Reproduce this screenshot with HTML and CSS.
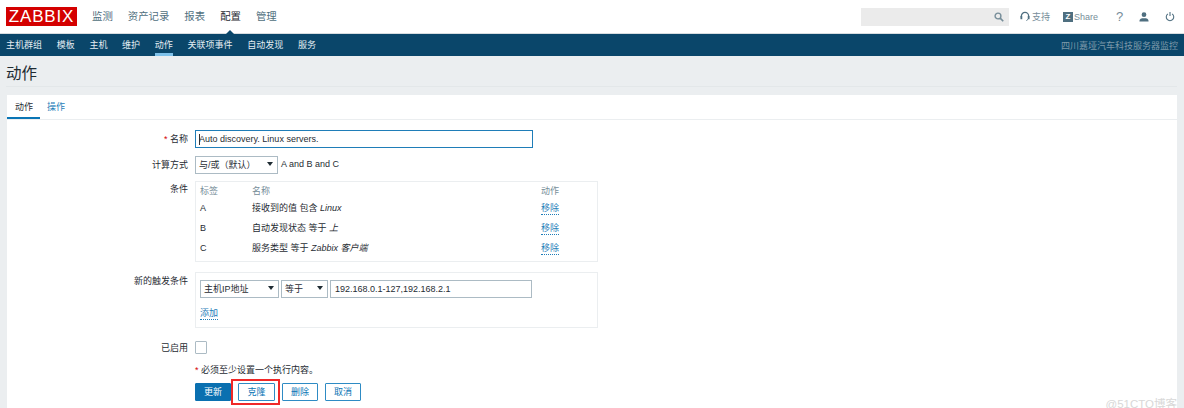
FILE: index.html
```html
<!DOCTYPE html>
<html lang="zh-CN">
<head>
    <meta charset="UTF-8">
    <title>动作</title>
    <link rel="stylesheet" href="styles.css">
</head>
<body>
    <header class="top-nav">
        <div class="logo">ZABBIX</div>
        <ul class="main-menu">
            <li>监测</li>
            <li>资产记录</li>
            <li>报表</li>
            <li class="selected">配置</li>
            <li>管理</li>
        </ul>
        <div class="top-tools">
            <div class="search">
                <svg width="10" height="10" viewBox="0 0 13 13"><circle cx="5.2" cy="5.2" r="3.8" fill="none" stroke="#768d99" stroke-width="1.8"/><path d="M8 8l4 4" stroke="#768d99" stroke-width="2.2"/></svg>
            </div>
            <span class="tool support">
                <svg width="10" height="11" viewBox="0 0 11 12"><path d="M1.5 7V5.5a4 4 0 0 1 8 0V7" fill="none" stroke="#4f6f80" stroke-width="1.4"/><rect x="0.5" y="5.5" width="2" height="3.5" fill="#4f6f80"/><rect x="8.5" y="5.5" width="2" height="3.5" fill="#4f6f80"/><path d="M9 9l-2 1.500" stroke="#4f6f80"/></svg>
                支持
            </span>
            <span class="tool share"><b class="share-icon">Z</b>Share</span>
            <span class="tool help">?</span>
            <span class="tool user">
                <svg width="10" height="10" viewBox="0 0 11 11"><circle cx="5.500" cy="3" r="2.600" fill="#4f6f80"/><path d="M0.500 10.500c0-3 2-3.500 5-3.500s5 .5 5 3.500z" fill="#4f6f80"/></svg>
            </span>
            <span class="tool power">
                <svg width="10" height="11" viewBox="0 0 12 12"><path d="M3.500 2.800a4.500 4.500 0 1 0 5 0" fill="none" stroke="#4f6f80" stroke-width="1.300"/><path d="M6 0.500v5" stroke="#4f6f80" stroke-width="1.300"/></svg>
            </span>
        </div>
    </header>

    <nav class="sub-nav">
        <ul class="sub-menu">
            <li>主机群组</li>
            <li>模板</li>
            <li>主机</li>
            <li>维护</li>
            <li class="selected">动作</li>
            <li>关联项事件</li>
            <li>自动发现</li>
            <li>服务</li>
        </ul>
        <div class="server-name">四川嘉垭汽车科技服务器监控</div>
    </nav>

    <main class="content">
        <h1 class="page-title">动作</h1>
        <div class="panel">
            <div class="tabs">
                <span class="tab active">动作</span>
                <span class="tab">操作</span>
            </div>
            <form class="form">
                <div class="row row-name">
                    <label class="row-label"><i class="req">*</i> 名称</label>
                    <div class="row-field"><input class="name-input" type="text" value="Auto discovery. Linux servers."></div>
                </div>
                <div class="row row-calc">
                    <label class="row-label">计算方式</label>
                    <div class="row-field inline">
                        <span class="select calc-select">与/或（默认）</span>
                        <span class="calc-text">A and B and C</span>
                    </div>
                </div>
                <div class="row row-cond">
                    <label class="row-label">条件</label>
                    <div class="row-field">
                        <div class="box cond-box">
                            <div class="cond-row cond-head"><span>标签</span><span>名称</span><span>动作</span></div>
                            <div class="cond-row"><span>A</span><span>接收到的值 包含 <em>Linux</em></span><a class="link">移除</a></div>
                            <div class="cond-row"><span>B</span><span>自动发现状态 等于 <em>上</em></span><a class="link">移除</a></div>
                            <div class="cond-row"><span>C</span><span>服务类型 等于 <em>Zabbix 客户端</em></span><a class="link">移除</a></div>
                        </div>
                    </div>
                </div>
                <div class="row row-new">
                    <label class="row-label">新的触发条件</label>
                    <div class="row-field">
                        <div class="box new-box">
                            <div class="inline new-fields">
                                <span class="select type-select">主机IP地址</span>
                                <span class="select op-select">等于</span>
                                <input class="value-input" type="text" value="192.168.0.1-127,192.168.2.1">
                            </div>
                            <a class="link add-link">添加</a>
                        </div>
                    </div>
                </div>
                <div class="row row-enabled">
                    <label class="row-label">已启用</label>
                    <div class="row-field"><span class="checkbox"></span></div>
                </div>
                <div class="row row-note">
                    <div class="row-label"></div>
                    <div class="row-field"><i class="req">*</i> 必须至少设置一个执行内容。</div>
                </div>
                <div class="row row-buttons">
                    <div class="row-label"></div>
                    <div class="row-field buttons">
                        <button class="btn primary" type="button">更新</button>
                        <span class="highlight"><button class="btn clone" type="button">克隆</button></span>
                        <button class="btn" type="button">删除</button>
                        <button class="btn" type="button">取消</button>
                    </div>
                </div>
            </form>
        </div>
    </main>
    <div class="watermark">@51CTO博客</div>
</body>
</html>
```

FILE: styles.css
```css
html, body {
    margin: 0;
    padding: 0;
    height: 408px;
    overflow: hidden;
}
body {
    background: #ebeef0;
    color: #1f2c33;
    font-family: "Liberation Sans", "Noto Sans CJK SC", sans-serif;
    font-size: 9px;
    position: relative;
}
ul {
    list-style: none;
    margin: 0;
    padding: 0;
}

/* top bar */
.top-nav {
    display: flex;
    align-items: center;
    height: 33px;
    padding: 0 9px 0 6px;
    background: #fff;
    border-bottom: 1px solid #d8dde0;
    box-sizing: content-box;
}
.logo {
    width: 71px;
    height: 19px;
    margin-top: -1px;
    background: #d40000;
    color: #fff;
    font-size: 17px;
    line-height: 19px;
    text-align: center;
    letter-spacing: 0.8px;
}
.main-menu {
    display: flex;
    gap: 15px;
    margin: -2px 0 0 15px;
    font-size: 10.400px;
    color: #4f6f80;
}
.main-menu .selected {
    color: #1f2c33;
    position: relative;
}
.main-menu .selected::after {
    content: "";
    position: absolute;
    left: 4px;
    top: 22px;
    border: 6px solid transparent;
    border-top: 0;
    border-bottom-color: #0a466a;
}
.top-tools {
    display: flex;
    align-items: center;
    margin-left: auto;
    color: #768d99;
}
.search {
    display: flex;
    align-items: center;
    justify-content: flex-end;
    width: 148px;
    height: 18px;
    padding-right: 5px;
    box-sizing: border-box;
    background: #ebebeb;
    margin-right: 11px;
}
.tool {
    display: flex;
    align-items: center;
    gap: 2px;
    font-size: 9px;
}
.support {
    width: 43px;
}
.share {
    width: 53px;
}
.share-icon {
    width: 10px;
    height: 10px;
    margin-right: -1px;
    background: #4f6f80;
    color: #fff;
    font-size: 8px;
    line-height: 10px;
    text-align: center;
}
.help {
    width: 23px;
    font-size: 13px;
}
.user {
    width: 26px;
}
.power {
    width: 10px;
}

/* second bar */
.sub-nav {
    display: flex;
    align-items: center;
    justify-content: space-between;
    height: 22px;
    padding: 0 6px;
    background: #0a466a;
    color: #e4edf2;
}
.sub-menu {
    display: flex;
    gap: 14.700px;
    height: 22px;
    line-height: 22px;
    font-size: 9px;
}
.sub-menu .selected {
    box-shadow: inset 0 -3px 0 #7ec1ea;
}
.server-name {
    color: #7d99a9;
    font-size: 9px;
}

/* page */
.page-title {
    margin: 0 7px 8px 6px;
    height: 31px;
    line-height: 35px;
    font-size: 15.500px;
    font-weight: normal;
    border-bottom: 1px solid #e3e7e9;
    box-sizing: border-box;
}
.panel {
    margin: 0 7px;
    background: #fff;
    height: 320px;
}
.tabs {
    display: flex;
    height: 24px;
    border-bottom: 1px solid #ebeef0;
    font-size: 9px;
}
.tab {
    padding: 0 7px;
    line-height: 24px;
    color: #1f7db8;
}
.tab.active {
    padding: 0 7px 0 8px;
    color: #1f2c33;
    box-shadow: inset 0 -2px 0 #0a75b5;
}

/* form rows */
.form {
    padding-top: 10px;
}
.row {
    display: flex;
}
.row-label {
    width: 188px;
    padding-right: 7px;
    box-sizing: border-box;
    text-align: right;
    color: #1f2c33;
}
.row-field {
    flex: 1;
}
.inline {
    display: flex;
    align-items: center;
}
.req {
    color: #d40000;
    font-style: normal;
}
.row-name {
    height: 19px;
    line-height: 18px;
    margin-bottom: 6px;
}
.name-input {
    display: block;
    width: 338px;
    height: 18px;
    padding: 0 3px;
    box-sizing: border-box;
    border: 1px solid #1f7db8;
    outline: none;
    font: inherit;
    color: #1f2c33;
    /* text caret */
    background: linear-gradient(#333, #333) 3px 3px / 1px 11px no-repeat;
}
.row-calc {
    height: 19px;
    line-height: 19px;
    margin-bottom: 7px;
}
.row-calc .row-label {
    line-height: 21px;
}
.select {
    position: relative;
    display: block;
    height: 18px;
    line-height: 17px;
    padding-left: 3px;
    box-sizing: border-box;
    border: 1px solid #acbbc4;
    background: #fff;
    color: #1f2c33;
}
.select::after {
    content: "";
    position: absolute;
    right: 4px;
    top: 5px;
    border: 3px solid transparent;
    border-bottom: 0;
    border-top: 4px solid #1f2c33;
}
.calc-select {
    width: 83px;
}
.calc-text {
    margin-left: 3px;
}
.box {
    box-sizing: border-box;
    width: 403px;
    border: 1px solid #ebeef0;
    padding: 0 4px;
}
.row-cond {
    height: 81px;
    line-height: 17px;
    margin-bottom: 10px;
}
.cond-box {
    height: 81px;
    padding-top: 2px;
}
.cond-row {
    display: grid;
    grid-template-columns: 52px 289px 1fr;
    height: 20px;
    line-height: 20px;
}
.cond-head {
    height: 14px;
    line-height: 15px;
    color: #768d99;
}
.link {
    justify-self: start;
    color: #1f7db8;
    border-bottom: 1px dotted #1f7db8;
    height: 14px;
    line-height: 16px;
    margin-top: 2px;
}
.row-new {
    height: 56px;
    line-height: 18px;
    margin-bottom: 12px;
}
.new-box {
    height: 56px;
    padding-top: 7px;
}
.new-fields {
    gap: 2px;
}
.type-select {
    width: 79px;
}
.op-select {
    width: 47px;
}
.value-input {
    width: 202px;
    height: 18px;
    padding: 0 4px;
    box-sizing: border-box;
    border: 1px solid #acbbc4;
    font: inherit;
    color: #1f2c33;
}
.add-link {
    display: inline-block;
    margin-top: 7px;
}
.row-enabled {
    height: 14px;
    line-height: 16px;
    margin-bottom: 9px;
}
.checkbox {
    display: block;
    width: 12px;
    height: 13px;
    margin-top: 1px;
    border: 1px solid #acbbc4;
    border-radius: 1px;
    box-sizing: border-box;
}
.row-note {
    height: 14px;
    line-height: 14px;
    margin-bottom: 6px;
}
.buttons {
    display: flex;
    align-items: center;
    gap: 7px;
}
.btn {
    width: 36px;
    height: 18px;
    padding: 0;
    border: 1px solid #2e8bc4;
    border-radius: 1px;
    background: #fff;
    color: #0a75b5;
    font: inherit;
    line-height: 16px;
}
.btn.clone {
    display: block;
    width: 37px;
}
.btn.primary {
    background: #0a70b0;
    border-color: #0a70b0;
    color: #fff;
}
.highlight {
    position: relative;
}
/* red annotation drawn over the screenshot */
.highlight::after {
    content: "";
    position: absolute;
    inset: -4px -5px -4px -7px;
    border: 2px solid #f02828;
    pointer-events: none;
}

.watermark {
    position: absolute;
    right: 7px;
    bottom: -3px;
    color: #d8d8d8;
    font-size: 11.500px;
}
```
